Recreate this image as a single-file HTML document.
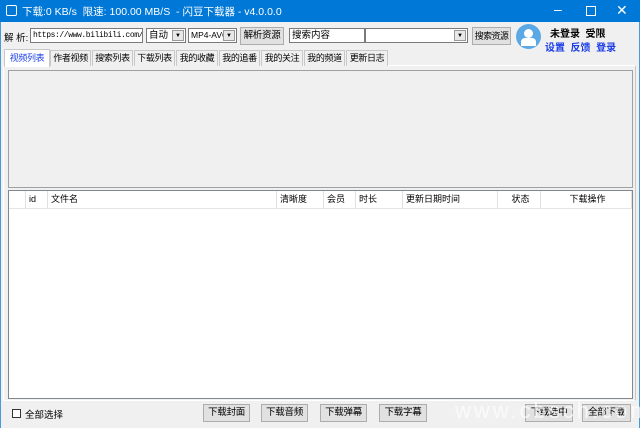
<!DOCTYPE html><html><head><meta charset="utf-8"><style>
*{margin:0;padding:0;box-sizing:border-box}
body{width:640px;height:428px;overflow:hidden;background:#f0f0f0;font-family:"Liberation Sans","Noto Sans CJK SC",sans-serif;font-size:9.5px;color:#000;position:relative;white-space:nowrap}
.a{position:absolute}
.title{left:0;top:0;width:640px;height:22px;background:#0078d7;color:#fff;font-size:10.5px}
.inp{background:#fff;border:1px solid #7a7a7a;height:15px;line-height:13px;padding-left:2px;overflow:hidden}
.btn{background:#e1e1e1;border:1px solid #adadad;text-align:center;line-height:16px;height:18px;letter-spacing:-0.3px}
.dd{position:absolute;right:1px;top:1px;width:12px;height:11px;border:1px solid #999;background:#e8e8e8;font-size:6px;line-height:10px;text-align:center}
.tab{top:50px;height:16px;border:1px solid #c8c8c8;border-bottom:none;background:#f0f0f0;text-align:center;line-height:14px;font-size:9px;letter-spacing:-0.4px;overflow:hidden}
.h{top:191px;height:17px;line-height:17px;border-right:1px solid #e0e0e0;padding-left:3px;font-size:9px}
</style></head><body>
<div class="a title"><div class="a" style="left:6px;top:5px;width:11px;height:11px;border:1.5px solid #fff;border-radius:2px"></div><span class="a" style="left:22px;top:4px">下载:0 KB/s &nbsp;限速: 100.00 MB/S &nbsp;- 闪豆下载器 - v4.0.0.0</span>
<span class="a" style="left:554px;top:1px;font-size:14px">–</span><div class="a" style="left:586px;top:6px;width:10px;height:10px;border:1px solid #fff"></div><span class="a" style="left:616px;top:2px;font-size:14px">✕</span></div>
<div class="a" style="left:0;top:22px;width:1px;height:406px;background:#4a9ad8"></div><div class="a" style="right:0;top:22px;width:1px;height:406px;background:#4a9ad8"></div>
<span class="a" style="left:4px;top:30px">解 析:</span>
<div class="a inp" style="left:30px;top:28px;width:113px;font-family:'Liberation Mono',monospace;font-size:8px;letter-spacing:-0.4px">https://www.bilibili.com/v</div>
<div class="a inp" style="left:146px;top:28px;width:40px">自动<div class="dd">▼</div></div>
<div class="a inp" style="left:188px;top:28px;width:49px;font-size:8.5px">MP4-AVC<div class="dd">▼</div></div>
<div class="a btn" style="left:240px;top:27px;width:44px">解析资源</div>
<div class="a inp" style="left:289px;top:28px;width:76px">搜索内容</div>
<div class="a inp" style="left:365px;top:28px;width:103px"><div class="dd">▼</div></div>
<div class="a btn" style="left:472px;top:27px;width:39px;font-size:9px;letter-spacing:-0.6px">搜索资源</div>
<div class="a" style="left:516px;top:24px;width:25px;height:25px;border-radius:50%;background:#5aa9e6;overflow:hidden"><div class="a" style="left:8px;top:5px;width:9px;height:9px;border-radius:50%;background:#fff"></div><div class="a" style="left:5px;top:14px;width:15px;height:8px;border-radius:4px 4px 0 0;background:#fff"></div></div>
<span class="a" style="left:550px;top:25px;font-weight:bold;font-size:10px">未登录 &nbsp;受限</span>
<span class="a" style="left:545px;top:39px;font-weight:bold;color:#1a3de6;font-size:10px">设置 &nbsp;反馈 &nbsp;登录</span>
<div class="a" style="left:3px;top:65px;width:633px;height:336px;border:1px solid #fff;border-right-color:#c8c8c8"></div>
<div class="a tab" style="left:4px;top:49px;width:46px;height:18px;background:#fff;color:#1a3de6;border-color:#c8c8c8;line-height:16px">视频列表</div>
<div class="a tab" style="left:50px;width:41px">作者视频</div>
<div class="a tab" style="left:92px;width:41px">搜索列表</div>
<div class="a tab" style="left:134px;width:41px">下载列表</div>
<div class="a tab" style="left:176px;width:42px">我的收藏</div>
<div class="a tab" style="left:219px;width:41px">我的追番</div>
<div class="a tab" style="left:261px;width:42px">我的关注</div>
<div class="a tab" style="left:304px;width:41px">我的频道</div>
<div class="a tab" style="left:346px;width:42px">更新日志</div>
<div class="a" style="left:8px;top:70px;width:625px;height:118px;border:1px solid #a0a0a0;background:#f0f0f0"></div>
<div class="a" style="left:8px;top:190px;width:625px;height:209px;border:1px solid #828790;background:#fff"></div>
<div class="a" style="left:9px;top:208px;width:623px;height:1px;background:#e5e5e5"></div>
<div class="a h" style="left:9px;width:17px"></div>
<div class="a h" style="left:26px;width:22px">id</div>
<div class="a h" style="left:48px;width:229px">文件名</div>
<div class="a h" style="left:277px;width:47px">清晰度</div>
<div class="a h" style="left:324px;width:32px">会员</div>
<div class="a h" style="left:356px;width:47px">时长</div>
<div class="a h" style="left:403px;width:95px">更新日期时间</div>
<div class="a h" style="left:498px;width:43px;text-align:center">状态</div>
<div class="a h" style="left:541px;width:91px;text-align:center">下载操作</div>
<div class="a" style="left:12px;top:409px;width:9px;height:9px;border:1px solid #333;background:#fff"></div>
<span class="a" style="left:25px;top:407px">全部选择</span>
<div class="a btn" style="left:203px;top:404px;width:47px">下载封面</div>
<div class="a btn" style="left:261px;top:404px;width:47px">下载音频</div>
<div class="a btn" style="left:320px;top:404px;width:47px">下载弹幕</div>
<div class="a btn" style="left:379px;top:404px;width:48px">下载字幕</div>
<div class="a btn" style="left:525px;top:404px;width:48px">下载选中</div>
<div class="a btn" style="left:582px;top:404px;width:49px">全部下载</div>
<span class="a" style="left:455px;top:398px;font-size:22px;color:#fff;opacity:.7;letter-spacing:3px">www.cbsch.com</span>
</body></html>
